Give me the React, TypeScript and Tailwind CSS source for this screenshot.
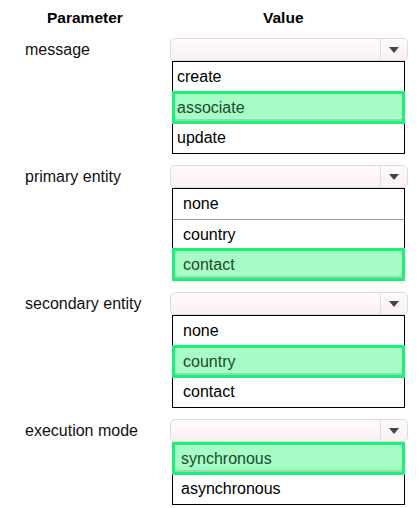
import React from "react";

type Option = { text: string; picked?: boolean };
type Field = { label: string; indent: number; options: Option[] };

const fields: Field[] = [
  {
    label: "message",
    indent: 4,
    options: [{ text: "create" }, { text: "associate", picked: true }, { text: "update" }],
  },
  {
    label: "primary entity",
    indent: 10,
    options: [{ text: "none" }, { text: "country" }, { text: "contact", picked: true }],
  },
  {
    label: "secondary entity",
    indent: 10,
    options: [{ text: "none" }, { text: "country", picked: true }, { text: "contact" }],
  },
  {
    label: "execution mode",
    indent: 8,
    options: [{ text: "synchronous", picked: true }, { text: "asynchronous" }],
  },
];

function SelectBox() {
  return (
    <div className="flex h-[23px] w-[238px] rounded-[5px] border border-[#dcdcdc] bg-gradient-to-b from-[#fffbfb] to-[#fbf0f1]">
      <div className="flex-1" />
      <div className="flex w-[27px] items-center justify-center border-l border-[#dedede]">
        <svg width="10" height="6" viewBox="0 0 10 6">
          <path d="M0 0 L10 0 L5 6 Z" fill="#454545" />
        </svg>
      </div>
    </div>
  );
}

function OptionList({ options, indent }: { options: Option[]; indent: number }) {
  return (
    <div className="ml-[2px] w-[233px] border border-black bg-white">
      {options.map((o, i) => {
        const prev = options[i - 1];
        if (o.picked) {
          return (
            <div
              key={o.text}
              className="relative z-10 -mx-px -my-px flex h-[33px] items-center border-[3px] border-[#1cf078] bg-[#a6fdc6] text-[#1d4a2c] shadow-[inset_0_-2px_0_#8fdcaa]"
              style={{ paddingLeft: indent - 2 }}
            >
              {o.text}
            </div>
          );
        }
        const divider = i > 0 && !prev?.picked;
        return (
          <div
            key={o.text}
            className={
              "flex h-[30px] items-center text-black " +
              (divider ? "border-t border-[#a3a3a3]" : "")
            }
            style={{ paddingLeft: indent }}
          >
            {o.text}
          </div>
        );
      })}
    </div>
  );
}

export default function App() {
  return (
    <div
      className="h-[508px] w-[419px] bg-white text-[16px] text-[#111]"
      style={{ fontFamily: '"Liberation Sans", Arial, sans-serif' }}
    >
      <div className="flex pt-[8px] text-[15.5px] font-bold leading-[20px] text-black">
        <div className="w-[170px] pl-[47px]">Parameter</div>
        <div className="w-[238px] pl-[93px]">Value</div>
      </div>
      <div className="mt-[10px] flex flex-col gap-[11px]">
        {fields.map((f) => (
          <div key={f.label} className="flex">
            <div className="flex h-[23px] w-[170px] items-center pl-[25px] text-[#111]">
              {f.label}
            </div>
            <div className="flex flex-col">
              <SelectBox />
              <OptionList options={f.options} indent={f.indent} />
            </div>
          </div>
        ))}
      </div>
    </div>
  );
}
